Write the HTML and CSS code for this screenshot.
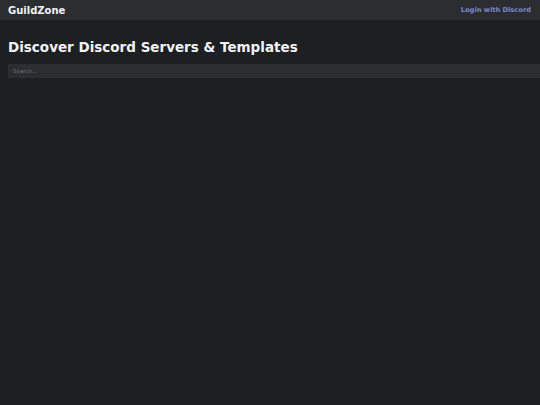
FILE: index.html
```html
<!DOCTYPE html>
<html lang="en">
<head>
<meta charset="utf-8">
<title>GuildZone</title>
<link rel="stylesheet" href="styles.css">
</head>
<body>
<header class="topbar">
  <span class="brand">GuildZone</span>
  <a class="login" href="#">Login with Discord</a>
</header>
<main class="content">
  <h1 class="title">Discover Discord Servers &amp; Templates</h1>
  <input class="search" type="text" placeholder="Search...">
</main>
</body>
</html>
```

FILE: styles.css
```css
html, body {
  margin: 0;
  padding: 0;
  overflow: hidden;
}
body {
  background: #1e1f22;
  color: #f2f3f5;
  font-family: "DejaVu Sans", Verdana, sans-serif;
  width: 540px;
  height: 405px;
}
.topbar {
  height: 20px;
  background: #2b2d31;
  display: flex;
  align-items: center;
  justify-content: space-between;
  padding: 0 9px 0 8px;
}
.brand {
  font-weight: bold;
  font-size: 10px;
  color: #f2f3f5;
}
.login {
  font-weight: bold;
  font-size: 6.7px;
  color: #7b88c9;
  text-decoration: none;
}
.content {
  padding: 19px 8px 0 8px;
}
.title {
  margin: 0 0 9px 0;
  font-size: 13.5px;
  font-weight: bold;
  color: #f2f3f5;
}
.search {
  display: block;
  box-sizing: content-box;
  width: 100%;
  height: 14px;
  margin: 0;
  padding: 0 5px;
  border: none;
  outline: none;
  background: #2b2d31;
  color: #dbdee1;
  font-family: "DejaVu Sans", Verdana, sans-serif;
  font-size: 5.5px;
}
.search::placeholder {
  color: #6d6f78;
}
```
